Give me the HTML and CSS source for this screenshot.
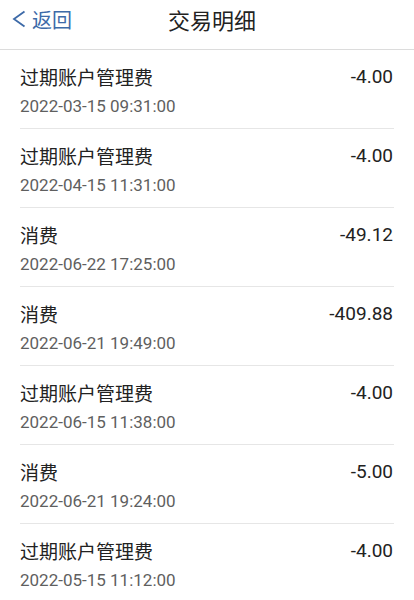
FILE: index.html
```html
<!DOCTYPE html>
<html>
<head>
    <meta charset="UTF-8">
    <meta name="viewport" content="width=device-width, initial-scale=1.0">
    <title>交易明细</title>
    <link rel="stylesheet" href="styles.css">
</head>
<body>
<div class="header">
    <div class="back">
        <svg class="back-icon" width="14" height="18" viewBox="0 0 14 18">
            <path d="M12.5 1.5 L2 9 L12.5 16.5" fill="none" stroke="#3d6aa8" stroke-width="1.8"/>
        </svg>
        <span>返回</span>
    </div>
    <div class="title">交易明细</div>
</div>
<div class="list">
    <div class="item">
        <div class="row-top"><span class="name">过期账户管理费</span><span class="amount">-4.00</span></div>
        <div class="date">2022-03-15 09:31:00</div>
    </div>
    <div class="item">
        <div class="row-top"><span class="name">过期账户管理费</span><span class="amount">-4.00</span></div>
        <div class="date">2022-04-15 11:31:00</div>
    </div>
    <div class="item">
        <div class="row-top"><span class="name">消费</span><span class="amount">-49.12</span></div>
        <div class="date">2022-06-22 17:25:00</div>
    </div>
    <div class="item">
        <div class="row-top"><span class="name">消费</span><span class="amount">-409.88</span></div>
        <div class="date">2022-06-21 19:49:00</div>
    </div>
    <div class="item">
        <div class="row-top"><span class="name">过期账户管理费</span><span class="amount">-4.00</span></div>
        <div class="date">2022-06-15 11:38:00</div>
    </div>
    <div class="item">
        <div class="row-top"><span class="name">消费</span><span class="amount">-5.00</span></div>
        <div class="date">2022-06-21 19:24:00</div>
    </div>
    <div class="item">
        <div class="row-top"><span class="name">过期账户管理费</span><span class="amount">-4.00</span></div>
        <div class="date">2022-05-15 11:12:00</div>
    </div>
</div>
</body>
</html>
```

FILE: styles.css
```css
body {
    margin: 0;
    background-color: #fff;
    font-family: Roboto, "Noto Sans CJK SC", sans-serif;
    color: #222;
}
.header {
    position: relative;
    height: 49px;
    border-bottom: 1px solid #dcdcdc;
    display: flex;
    align-items: center;
    justify-content: center;
}
.back {
    position: absolute;
    left: 12px;
    top: 0;
    height: 38px;
    display: flex;
    align-items: center;
    color: #3d6aa8;
    font-size: 20px;
}
.back-icon {
    margin-right: 6px;
}
.title {
    font-size: 22px;
    margin-top: -12px;
    margin-left: 10px;
}
.item {
    margin: 0 20px;
    padding: 12px 1px 10px 0;
    border-bottom: 1px solid #e6e6e6;
}
.row-top {
    display: flex;
    justify-content: space-between;
    align-items: center;
    height: 28px;
    font-size: 19px;
}
.date {
    margin-top: 4px;
    line-height: 24px;
    font-size: 17px;
    color: #5f5f5f;
}
```
